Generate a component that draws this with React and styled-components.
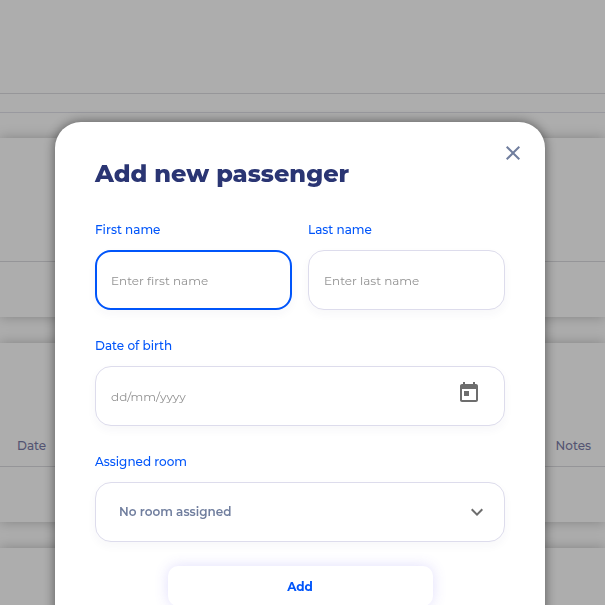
import React from "react";
import styled, { createGlobalStyle } from "styled-components";

const GlobalStyle = createGlobalStyle`
  *, *::before, *::after { box-sizing: border-box; }
  body {
    margin: 0;
    background: #ffffff;
    font-family: Montserrat, Inter, "Open Sans", sans-serif;
    font-size: 12px;
  }
  button, input, select { font: inherit; }
`;

const Page = styled.div`
  height: 100vh;
  overflow: hidden;
`;

const TopBar = styled.header`
  height: 94px;
  border-bottom: 1px solid #dedee2;
`;

const SubBar = styled.div`
  height: 19px;
  border-bottom: 1px solid #e2e2ea;
`;

const Cards = styled.main`
  display: flex;
  flex-direction: column;
  gap: 26px;
  padding-top: 25px;
`;

const Card = styled.section`
  height: 179px;
  flex: none;
  background: #ffffff;
  box-shadow: 0 0 12px rgba(0, 0, 0, 0.25);
`;

const CardHead = styled.div`
  display: flex;
  align-items: flex-end;
  justify-content: space-between;
  height: 124px;
  padding: 0 14px 11px 17px;
  border-bottom: 1px solid #dcdce0;
  color: #7b7ca8;
  font-weight: 500;
  line-height: 18px;
`;

const Overlay = styled.div`
  position: fixed;
  inset: 0;
  overflow: hidden;
  padding: 122px 60px 0 55px;
  background: rgba(0, 0, 0, 0.32);
`;

const Dialog = styled.section`
  max-width: 490px;
  margin: 0 auto;
  padding: 19px 40px 40px;
  border-radius: 26px;
  background: #ffffff;
  box-shadow: 0 0 12px rgba(0, 0, 0, 0.5);
`;

const DialogHead = styled.div`
  display: flex;
  align-items: flex-start;
  justify-content: space-between;
  margin-right: -20px;
`;

const Title = styled.h1`
  margin: 0;
  padding-top: 18px;
  color: #2a3573;
  font-size: 24px;
  font-weight: 800;
  line-height: 30px;
`;

const IconButton = styled.button`
  display: flex;
  padding: 0;
  border: 0;
  background: none;
  color: ${(p) => p.$color};
  cursor: pointer;
`;

const Icon = styled.svg`
  width: 24px;
  height: 24px;
  flex: none;
  fill: currentColor;
`;

const Form = styled.form`
  display: grid;
  grid-template-columns: 1fr 1fr;
  gap: 24px 16px;
  padding-top: 29px;
`;

const Field = styled.div`
  display: flex;
  flex-direction: column;
  gap: 8px;
  min-width: 0;
  grid-column: ${(p) => (p.$wide ? "1 / -1" : "auto")};
`;

const Label = styled.label`
  color: #0055fa;
  font-weight: 500;
  line-height: 24px;
`;

const Control = styled.div`
  display: flex;
  align-items: center;
  height: 60px;
  padding: ${(p) => (p.$active ? "0 14px" : "0 15px")};
  border: ${(p) => (p.$active ? "2px solid #0055fa" : "1px solid #dddcec")};
  border-radius: 16px;
  background: #ffffff;
  box-shadow: 0 4px 10px rgba(40, 40, 90, 0.04);
`;

const DateControl = styled(Control)`
  padding-right: 23px;
  & ${IconButton} { margin-bottom: 6px; }
`;

const SelectControl = styled(Control)`
  display: grid;
  padding: 0;
  color: #6d6d6d;
  & > * { grid-area: 1 / 1; }
  & > ${Icon} {
    justify-self: end;
    margin-right: 15px;
    pointer-events: none;
  }
`;

const Input = styled.input`
  flex: 1;
  min-width: 0;
  width: 100%;
  padding: 2px 0 0;
  border: 0;
  outline: 0;
  background: none;
  color: #2a3573;
  line-height: 20px;
  &::placeholder { color: #929292; opacity: 1; }
`;

const Select = styled.select`
  width: 100%;
  height: 58px;
  padding: 0 48px 2px 23px;
  border: 0;
  outline: 0;
  appearance: none;
  background: none;
  color: #707e9e;
  font-weight: 600;
`;

const SubmitButton = styled.button`
  grid-column: 1 / -1;
  justify-self: center;
  width: 65%;
  max-width: 265px;
  height: 40px;
  padding: 0;
  border: 0;
  border-radius: 10px;
  background: #ffffff;
  color: #0055fa;
  font-weight: 700;
  box-shadow: 0 0 14px rgba(90, 70, 240, 0.18);
`;

function TextField({ id, label, placeholder, active }) {
  return (
    <Field>
      <Label htmlFor={id}>{label}</Label>
      <Control $active={active}>
        <Input id={id} type="text" placeholder={placeholder} />
      </Control>
    </Field>
  );
}

export default function App() {
  return (
    <>
      <GlobalStyle />
      <Page>
        <TopBar />
        <SubBar />
        <Cards>
          <Card><CardHead /></Card>
          <Card>
            <CardHead><span>Date</span><span>Notes</span></CardHead>
          </Card>
          <Card />
        </Cards>
      </Page>
      <Overlay>
        <Dialog role="dialog" aria-modal="true" aria-labelledby="dialog-title">
          <DialogHead>
            <Title id="dialog-title">Add new passenger</Title>
            <IconButton type="button" aria-label="Close" $color="#707e9e">
              <Icon viewBox="0 0 24 24" aria-hidden="true">
                <path d="M19 6.41 17.59 5 12 10.59 6.41 5 5 6.41 10.59 12 5 17.59 6.41 19 12 13.41 17.59 19 19 17.59 13.41 12z" />
              </Icon>
            </IconButton>
          </DialogHead>
          <Form onSubmit={(e) => e.preventDefault()}>
            <TextField id="first-name" label="First name" placeholder="Enter first name" active />
            <TextField id="last-name" label="Last name" placeholder="Enter last name" />
            <Field $wide>
              <Label htmlFor="birth-date">Date of birth</Label>
              <DateControl>
                <Input id="birth-date" type="text" placeholder="dd/mm/yyyy" />
                <IconButton type="button" aria-label="Choose date" $color="#6d6d6d">
                  <Icon viewBox="0 0 24 24" aria-hidden="true">
                    <path d="M19 3h-1V1h-2v2H8V1H6v2H5c-1.11 0-1.99.9-1.99 2L3 19c0 1.1.89 2 2 2h14c1.1 0 2-.9 2-2V5c0-1.1-.9-2-2-2zm0 16H5V8h14v11zM7 10h5v5H7z" />
                  </Icon>
                </IconButton>
              </DateControl>
            </Field>
            <Field $wide>
              <Label htmlFor="room">Assigned room</Label>
              <SelectControl>
                <Select id="room">
                  <option>No room assigned</option>
                </Select>
                <Icon viewBox="0 0 24 24" aria-hidden="true">
                  <path d="M16.59 8.59 12 13.17 7.41 8.59 6 10l6 6 6-6z" />
                </Icon>
              </SelectControl>
            </Field>
            <SubmitButton type="submit">Add</SubmitButton>
          </Form>
        </Dialog>
      </Overlay>
    </>
  );
}
